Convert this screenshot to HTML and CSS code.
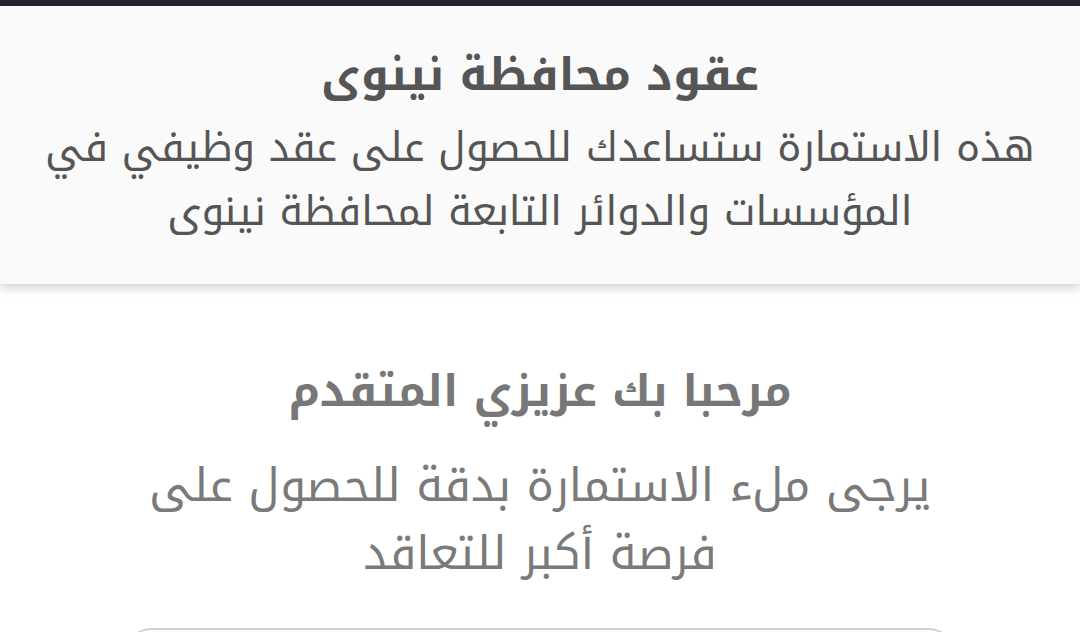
FILE: index.html
```html
<!DOCTYPE html>
<html lang="ar" dir="rtl">
<head>
<meta charset="utf-8">
<link rel="stylesheet" href="styles.css">
</head>
<body>
<div class="topbar"></div>
<header class="hero">
  <h1 class="hero-title">عقود محافظة نينوى</h1>
  <p class="hero-text">هذه الاستمارة ستساعدك للحصول على عقد وظيفي في المؤسسات والدوائر التابعة لمحافظة نينوى</p>
</header>
<main class="content">
  <h2 class="welcome">مرحبا بك عزيزي المتقدم</h2>
  <p class="note">يرجى ملء الاستمارة بدقة للحصول على فرصة أكبر للتعاقد</p>
  <div class="field"></div>
</main>
</body>
</html>
```

FILE: styles.css
```css
html, body {
  margin: 0;
  padding: 0;
  background: #ffffff;
  font-family: "Noto Kufi Arabic", "Noto Sans Arabic", "DejaVu Sans", sans-serif;
  overflow: hidden;
}
.topbar {
  height: 6px;
  background: #23262f;
}
.hero {
  background: #fafafa;
  padding: 42px 30px 40px;
  text-align: center;
  box-shadow: 0 4px 10px rgba(0,0,0,0.18);
  position: relative;
}
.hero-title {
  margin: 0;
  font-size: 45px;
  font-weight: bold;
  line-height: 54px;
  color: #555555;
}
.hero-text {
  margin: 14px 0 0;
  font-size: 40.5px;
  line-height: 64px;
  color: #555555;
}
.content {
  padding: 78px 140px 0;
  text-align: center;
}
.welcome {
  margin: 0;
  font-size: 44px;
  font-weight: bold;
  line-height: 60px;
  color: #777777;
}
.note {
  margin: 30px 0 0;
  font-size: 46px;
  line-height: 68px;
  color: #7a7a7a;
}
.field {
  margin: 40px -13px 0;
  height: 60px;
  border: 2px solid #d0d0d0;
  border-radius: 24px;
}
```
